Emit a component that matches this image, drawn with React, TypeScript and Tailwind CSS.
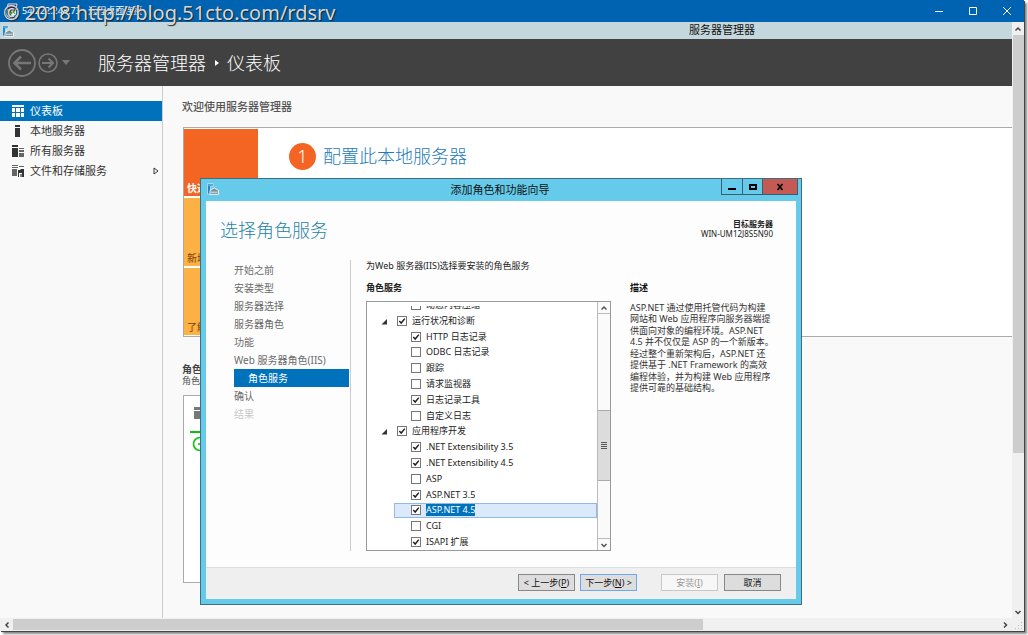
import React from "react";

const FONT = "font-['Noto_Sans','Noto_Sans_CJK_SC',sans-serif]";

function ManagerIcon({ className }: { className: string }) {
  return (
    <svg viewBox="0 0 12 12" className={className} aria-hidden="true">
      <path d="M.5.5h5.500v3h-2.500v7.500h-3z" fill="#1e88d0" stroke="#eef8fd" strokeWidth=".6" />
      <path d="M1.200 2h3.800" stroke="#bfe3f7" strokeWidth=".7" />
      <path d="M3 7.500 7.200 4.800l4.300 2.700v3.900H3z" fill="#7e929e" stroke="#f4fafd" strokeWidth=".9" />
      <path d="M4 9.200h6.500" stroke="#e8f0f4" strokeWidth=".9" />
    </svg>
  );
}

function RemoteIcon() {
  return (
    <svg viewBox="0 0 16 16" className="size-4" aria-hidden="true">
      <path d="M4 1h9l-1 6H3z" fill="#23306e" stroke="#e6e6ee" strokeWidth="1" />
      <circle cx="8" cy="9" r="6.2" fill="none" stroke="#d9dde2" strokeWidth="1.2" />
      <circle cx="8.5" cy="9.5" r="3.6" fill="#f2f4f2" />
      <path d="M6 8.5 8 10 6 11.6M11 7.5 9.2 9l1.8 1.6" stroke="#3d9b35" strokeWidth="1.2" fill="none" />
    </svg>
  );
}

function Chevron({ dir, className }: { dir: "up" | "down" | "left" | "right"; className: string }) {
  const d = {
    up: "M1.5 5.5 4 3l2.500 2.500",
    down: "M1.5 3 4 5.500 6.500 3",
    left: "M5.500 1.500 3 4l2.500 2.500",
    right: "M3 1.500 5.500 4 3 6.500",
  }[dir];
  return (
    <svg viewBox="0 0 8 8" className={className} fill="none" stroke="currentColor" strokeWidth="1.5" aria-hidden="true">
      <path d={d} />
    </svg>
  );
}

function SideIcon({ kind }: { kind: string }) {
  return (
    <svg viewBox="0 0 14 14" className="size-[14px]" fill="currentColor" aria-hidden="true">
      {kind === "grid" && (
        <path d="M1 1h12v2H1zM1 4h3v4H1zM5 4h4v4H5zM10 4h3v4h-3zM1 9h3v4H1zM5 9h4v4H5zM10 9h3v4h-3z" />
      )}
      {kind === "server" && <path d="M4 1h5v2H4zM4 4h5v9H4z" />}
      {kind === "servers" && (
        <>
          <path d="M1 1h6v2H1zM1 4h6v9H1z" />
          <path d="M8 4h5v1H8zM8 6h5v2H8zM8 9h5v4H8z" opacity=".75" />
        </>
      )}
      {kind === "storage" && (
        <>
          <path d="M1 1h6v1H1zM1 3h6v1H1zM1 5h5v7H1zM8 2h5v1H8z" opacity=".75" />
          <path d="M7 6h2l1-1h3v8h-2V9H8v4H7z" />
          <path d="M9 10h3v3H9z" opacity=".6" />
        </>
      )}
    </svg>
  );
}

const sideItems = [
  { label: "仪表板", icon: "grid" },
  { label: "本地服务器", icon: "server" },
  { label: "所有服务器", icon: "servers" },
  { label: "文件和存储服务", icon: "storage" },
];

const steps = ["开始之前", "安装类型", "服务器选择", "服务器角色", "功能", "Web 服务器角色(IIS)", "角色服务", "确认", "结果"];

const roles = [
  { label: "动态内容压缩", on: false },
  { label: "运行状况和诊断", on: true, parent: true },
  { label: "HTTP 日志记录", on: true },
  { label: "ODBC 日志记录", on: false },
  { label: "跟踪", on: false },
  { label: "请求监视器", on: false },
  { label: "日志记录工具", on: true },
  { label: "自定义日志", on: false },
  { label: "应用程序开发", on: true, parent: true },
  { label: ".NET Extensibility 3.5", on: true },
  { label: ".NET Extensibility 4.5", on: true },
  { label: "ASP", on: false },
  { label: "ASP.NET 3.5", on: true },
  { label: "ASP.NET 4.5", on: true, selected: true },
  { label: "CGI", on: false },
  { label: "ISAPI 扩展", on: true },
];

const description = [
  "ASP.NET 通过使用托管代码为构建",
  "网站和 Web 应用程序向服务器端提",
  "供面向对象的编程环境。ASP.NET",
  "4.5 并不仅仅是 ASP 的一个新版本。",
  "经过整个重新架构后，ASP.NET 还",
  "提供基于 .NET Framework 的高效",
  "编程体验，并为构建 Web 应用程序",
  "提供可靠的基础结构。",
];

type Role = (typeof roles)[number];

function RoleRow({ role }: { role: Role }) {
  return (
    <li className={role.parent ? "flex flex-1 items-center pl-[13px]" : "flex flex-1"}>
      {role.parent && (
        <svg viewBox="0 0 8 8" className="mr-[9px] size-2" aria-hidden="true">
          <path d="M7 2V7.500H1.500z" fill="#333" />
        </svg>
      )}
      <label
        className={
          role.selected
            ? "ml-[27px] flex flex-1 items-center gap-[5px] border border-[#8fb8ec] bg-[#dce9fb] pl-4"
            : role.parent
              ? "flex items-center gap-[5px]"
              : "ml-[27px] flex flex-1 items-center gap-[5px] pl-[17px]"
        }
      >
        <span className="grid">
          <input
            type="checkbox"
            defaultChecked={role.on}
            className="peer col-start-1 row-start-1 size-[10px] appearance-none border border-[#777] bg-white"
          />
          <svg viewBox="0 0 10 10" className="pointer-events-none invisible col-start-1 row-start-1 size-[10px] peer-checked:visible" aria-hidden="true">
            <path d="M2.300 5 4.200 7 7.800 2.600" fill="none" stroke="#222" strokeWidth="1.500" />
          </svg>
        </span>
        <span className={role.selected ? "bg-[#0072bc] text-white" : ""}>{role.label}</span>
      </label>
    </li>
  );
}

function Wizard() {
  return (
    <section
      aria-label="添加角色和功能向导"
      className="absolute top-[178px] left-[200px] flex h-[427px] w-[602px] flex-col border border-[#3d6f80] bg-[#66cbea] px-[5px] pb-[5px]"
    >
      <header className="-mr-0.5 flex h-[22px] shrink-0 items-start">
        <ManagerIcon className="mt-1 ml-px size-3" />
        <h2 className="flex-1 pl-[60px] text-center text-[11px] leading-[21px] text-[#111]">添加角色和功能向导</h2>
        <div className="flex h-4 border border-t-0 border-[#35606f]">
          <button aria-label="最小化" className="flex w-[21px] items-center justify-center border-r border-[#35606f]">
            <svg viewBox="0 0 8 8" className="size-2"><path d="M0 5h8v2H0z" /></svg>
          </button>
          <button aria-label="最大化" className="flex w-5 items-center justify-center border-r border-[#35606f]">
            <svg viewBox="0 0 8 8" className="size-2"><path d="M1 2h6v4H1z" fill="none" stroke="#000" strokeWidth="2" /></svg>
          </button>
          <button aria-label="关闭" className="flex w-[34px] items-center justify-center bg-[#c45a53]">
            <svg viewBox="0 0 8 8" className="size-2"><path d="m1.500 1 5 6M6.500 1l-5 6" stroke="#000" strokeWidth="1.600" /></svg>
          </button>
        </div>
      </header>

      <div className="flex min-h-0 flex-1 flex-col bg-[#fdfdfd]">
        <div className="flex h-[59px] shrink-0 items-start justify-between pr-[23px] pl-[14px]">
          <h3 className="pt-4 text-[18px] leading-[26px] font-light text-[#1f83a8]">选择角色服务</h3>
          <p className="pt-[18px] text-right text-[8px] leading-[10px] text-[#222]">
            <b className="block">目标服务器</b>
            WIN-UM12J8S5N90
          </p>
        </div>

        <div className="flex h-[291px] pr-[20px] pl-7">
          <nav className="w-[117px] shrink-0 border-r border-[#ccc] pt-px pr-px">
            {steps.map((step) => (
              <a
                key={step}
                href="#"
                className={
                  step === "角色服务"
                    ? "block bg-[#0072bc] pl-[14px] text-[10px] leading-[18px] text-white"
                    : step === "结果"
                      ? "block text-[10px] leading-[18px] text-[#c8c8c8]"
                      : "block text-[10px] leading-[18px] text-[#6a6a6a]"
                }
              >
                {step}
              </a>
            ))}
          </nav>

          <div className="ml-[15px] flex w-[245px] shrink-0 flex-col text-[9px] text-[#222]">
            <p className="leading-[12px] whitespace-nowrap">为Web 服务器(IIS)选择要安装的角色服务</p>
            <h4 className="mt-2.5 leading-[12px] font-bold">角色服务</h4>
            <div className="mt-[7px] flex min-h-0 flex-1 border border-[#999] bg-white">
              <div className="mt-1 mb-px min-w-0 flex-1 overflow-hidden">
                <ul className="-mt-[9px] flex h-[253px] flex-col leading-[12px]">
                  {roles.map((role) => (
                    <RoleRow key={role.label} role={role} />
                  ))}
                </ul>
              </div>
              <div className="flex w-[13px] flex-col border-l border-[#bbb] bg-[#fafafa] text-[#555]">
                <button aria-label="向上滚动" className="flex h-3 items-center justify-center border-b border-[#bbb]">
                  <Chevron dir="up" className="size-2" />
                </button>
                <div className="flex-[96]" />
                <div className="flex flex-[70] items-center justify-center border-y border-[#aaa] bg-[#dcdcdc]">
                  <svg viewBox="0 0 6 8" className="h-2 w-1.5" fill="#555" shapeRendering="crispEdges"><path d="M0 1h6v1H0zM0 3h6v1H0zM0 5h6v1H0zM0 7h6v1H0z" /></svg>
                </div>
                <div className="flex-[57]" />
                <button aria-label="向下滚动" className="flex h-3 items-center justify-center border-t border-[#bbb]">
                  <Chevron dir="down" className="size-2" />
                </button>
              </div>
            </div>
          </div>

          <div className="ml-[19px] min-w-0 flex-1 pt-[22px] text-[9px] text-[#333]">
            <h4 className="leading-[12px] font-bold text-[#111]">描述</h4>
            <p className="mt-2 flex h-[91px] flex-col justify-between leading-[11px] whitespace-nowrap">
              {description.map((line) => (
                <span key={line}>{line}</span>
              ))}
            </p>
          </div>
        </div>

        <footer className="mt-auto flex h-8 items-start justify-end border-t border-[#ddd] bg-[#efefef] pt-1.5 pr-[15px] text-[9px] leading-[15px] text-[#111]">
          <button className="h-[17px] w-[57px] border border-[#888] bg-[#ddd]">&lt; 上一步(<u>P</u>)</button>
          <button className="ml-[5px] h-[17px] w-[57px] border border-[#6aa9f0] bg-[#ddd]">下一步(<u>N</u>) &gt;</button>
          <button disabled className="ml-6 h-[17px] w-[57px] border border-[#c5c9ca] bg-[#f7f7f7] text-[#999]">安装(<u>I</u>)</button>
          <button className="ml-1.5 h-[17px] w-[57px] border border-[#888] bg-[#ddd]">取消</button>
        </footer>
      </div>
    </section>
  );
}

export default function App() {
  return (
    <div className={`relative h-screen overflow-hidden bg-white pr-1 pb-1 ${FONT}`}>
      <div className="flex h-full flex-col bg-[#f9f9f9] shadow-[1px_1px_0_#444,3px_3px_2px_#888]">
        <header className="relative flex h-[22px] shrink-0 items-center bg-[#0063b1] text-white">
          <div className="ml-1 flex items-center gap-[2px]">
            <RemoteIcon />
            <h1 className="text-[9px] whitespace-nowrap">54.222.248.73 - 远程桌面连接</h1>
          </div>
          <div className="mr-[13px] ml-auto flex gap-[26px]">
            <button aria-label="最小化">
              <svg viewBox="0 0 8 8" className="size-2" stroke="#fff"><path d="M0 4.500h8" /></svg>
            </button>
            <button aria-label="最大化">
              <svg viewBox="0 0 8 8" className="size-2" stroke="#fff" fill="none"><path d="M.500.500h7v7h-7z" /></svg>
            </button>
            <button aria-label="关闭">
              <svg viewBox="0 0 8 8" className="size-2" stroke="#fff"><path d="m0 0 8 8M8 0 0 8" /></svg>
            </button>
          </div>
          <p className="pointer-events-none absolute top-0 left-[3px] z-10 text-[20px] leading-[26px] whitespace-nowrap text-[#d6d6d6] [text-shadow:1px_1px_1px_#222]">
            © 2018 http://blog.51cto.com/rdsrv
          </p>
        </header>

        <div className="flex min-h-0 flex-1">
          <div className="flex min-w-0 flex-1 flex-col">
            <div className="flex h-[17px] shrink-0 items-center bg-[#c3d7dd]">
              <ManagerIcon className="ml-[2px] size-3" />
              <span className="ml-[675px] text-[11px] whitespace-nowrap text-[#111]">服务器管理器</span>
            </div>

            <div className="flex h-[47px] shrink-0 items-center bg-[#414141] text-white">
              <button aria-label="后退" className="ml-2 text-[#777]">
                <svg viewBox="0 0 28 28" className="size-7" fill="none" stroke="currentColor">
                  <circle cx="14" cy="14" r="13" strokeWidth="1.800" />
                  <path d="M23 14H7M13 7.500 6.500 14l6.500 6.500" strokeWidth="2.600" />
                </svg>
              </button>
              <button aria-label="前进" className="ml-[2px] text-[#777]">
                <svg viewBox="0 0 20 20" className="size-5" fill="none" stroke="currentColor">
                  <circle cx="10" cy="10" r="9" strokeWidth="1.600" />
                  <path d="M4 10h11M10.500 5.500 15 10l-4.500 4.500" strokeWidth="2" />
                </svg>
              </button>
              <svg viewBox="0 0 8 5" className="ml-1 h-[5px] w-2" fill="#777" aria-hidden="true"><path d="M0 0h8L4 5z" /></svg>
              <div className="ml-7 flex items-center text-[18px] leading-[26px] font-light whitespace-nowrap">
                <span>服务器管理器</span>
                <svg viewBox="0 0 4 6" className="mr-2 ml-[9px] h-1.5 w-1" fill="#fff" aria-hidden="true"><path d="M0 0v6l4-3z" /></svg>
                <span>仪表板</span>
              </div>
            </div>

            <div className="flex min-h-0 flex-1">
              <nav className="flex w-[163px] shrink-0 flex-col border-r border-[#ccc] pt-[15px]">
                {sideItems.map((item, i) => (
                  <a
                    key={item.label}
                    href="#"
                    className={
                      i === 0
                        ? "flex h-5 items-center gap-[5px] bg-[#0072bc] pr-[3px] pl-[11px] text-[11px] text-white"
                        : "flex h-5 items-center gap-[5px] pr-[3px] pl-[11px] text-[11px] text-[#333]"
                    }
                  >
                    <SideIcon kind={item.icon} />
                    <span className="flex-1">{item.label}</span>
                    {item.icon === "storage" && (
                      <svg viewBox="0 0 6 8" className="h-2 w-1.5" fill="#fff" stroke="#333" aria-hidden="true"><path d="M1 1v6l4-3z" /></svg>
                    )}
                  </a>
                ))}
              </nav>

              <main className="min-w-0 flex-1 pt-[13px] pl-[19px] text-[#444]">
                <h2 className="text-[11px] leading-[16px] font-medium text-[#555]">欢迎使用服务器管理器</h2>
                <div className="mt-3 ml-px flex h-[210px] border border-r-0 border-[#aaa] bg-white pt-px pb-px">
                  <div className="grid w-[74px] grid-rows-3 gap-[2px] text-[10px] leading-[16px]">
                    <div className="flex items-end bg-[#f46523] pl-[3px] font-bold text-white">快速</div>
                    <div className="flex items-end bg-[#fdb044] pl-[3px] text-[#7a4206]">新增</div>
                    <div className="flex items-end bg-[#fdb044] pl-[3px] text-[#7a4206]">了解</div>
                  </div>
                  <div className="mt-[14px] flex h-[27px] items-center gap-[7px] pl-[31px]">
                    <span className="flex size-[27px] items-center justify-center rounded-full bg-[#f46523] text-[18px] font-light text-white">1</span>
                    <a href="#" className="text-[18px] font-light whitespace-nowrap text-[#2479b8]">配置此本地服务器</a>
                  </div>
                </div>
                <h3 className="mt-[26px] text-[10px] leading-[12px] font-bold text-[#444]">角色</h3>
                <p className="text-[9px] leading-[12px] text-[#555]">角色</p>
                <div className="mt-2 ml-px h-[188px] w-[240px] border border-[#aaa] bg-white pt-[10px] pl-1.5">
                  <svg viewBox="0 0 40 46" className="h-[46px] w-10" aria-hidden="true">
                    <path d="M4 1h10v3H4zM4 5h10v8H4z" fill="#777" />
                    <path d="M0 26h40" stroke="#0ac20a" strokeWidth="2" />
                    <circle cx="10" cy="38" r="6.500" fill="none" stroke="#0ac20a" strokeWidth="1.600" />
                    <path d="M8 38h4" stroke="#0ac20a" strokeWidth="1.600" />
                  </svg>
                </div>
              </main>
            </div>
          </div>

          <div className="flex w-3 shrink-0 flex-col bg-[#f0f0f0] text-[#444]">
            <button aria-label="向上滚动" className="flex h-[13px] items-center justify-center">
              <Chevron dir="up" className="size-2" />
            </button>
            <div className="ml-px flex-[418] bg-[#cdcdcd]" />
            <div className="flex-[153]" />
            <button aria-label="向下滚动" className="flex h-3 items-center justify-center">
              <Chevron dir="down" className="size-2" />
            </button>
          </div>
        </div>

        <div className="flex h-[13px] shrink-0 bg-[#f0f0f0] text-[#444]">
          <button aria-label="向左滚动" className="flex w-[13px] items-center justify-center">
            <Chevron dir="left" className="size-2" />
          </button>
          <div className="mt-px mb-px flex-[690] bg-[#cdcdcd]" />
          <div className="flex-[296]" />
          <button aria-label="向右滚动" className="flex w-3 items-center justify-center">
            <Chevron dir="right" className="size-2" />
          </button>
          <svg viewBox="0 0 13 13" className="size-[13px]" fill="#bbb" aria-hidden="true">
            <path d="M10 4h1v1h-1zM7 7h1v1H7zM10 7h1v1h-1zM4 10h1v1H4zM7 10h1v1H7zM10 10h1v1h-1z" />
          </svg>
        </div>
      </div>
      <Wizard />
    </div>
  );
}
